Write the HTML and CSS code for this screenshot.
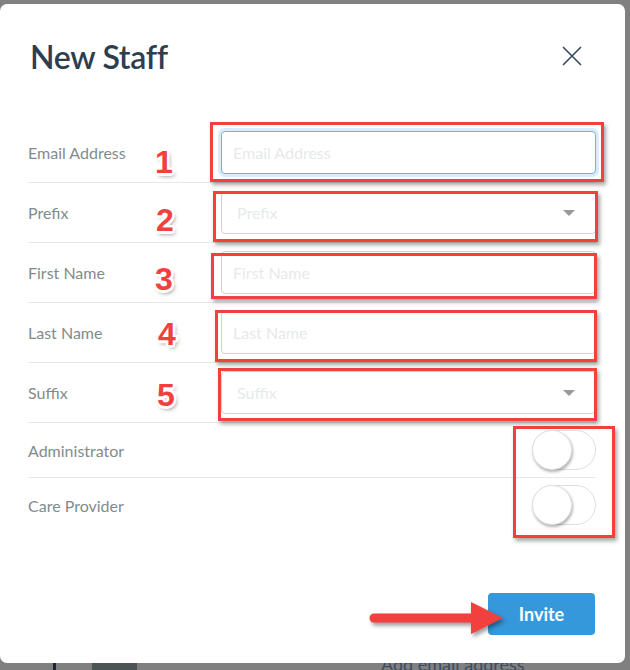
FILE: index.html
```html
<!DOCTYPE html>
<html lang="en">
<head>
  <meta charset="UTF-8" />
  <meta name="viewport" content="width=device-width, initial-scale=1.0" />
  <title>New Staff</title>
  <link rel="stylesheet" href="styles.css">
</head>
<body>
  <div class="backdrop">
    <div class="modal">
      <div class="modal-header">
        <h1>New Staff</h1>
        <button class="close" aria-label="Close">
          <svg width="20" height="20" viewBox="0 0 20 20">
            <path d="M1 1 L19 19 M19 1 L1 19" stroke="#34495e" stroke-width="1.6" fill="none" />
          </svg>
        </button>
      </div>

      <form class="fields">
        <div class="field">
          <label for="email">Email Address</label>
          <input type="email" id="email" class="input focused" placeholder="Email Address" />
        </div>
        <div class="field">
          <label for="prefix">Prefix</label>
          <div class="select">
            <span class="placeholder">Prefix</span>
            <span class="caret"></span>
          </div>
        </div>
        <div class="field">
          <label for="firstName">First Name</label>
          <input type="text" id="firstName" class="input" placeholder="First Name" />
        </div>
        <div class="field">
          <label for="lastName">Last Name</label>
          <input type="text" id="lastName" class="input" placeholder="Last Name" />
        </div>
        <div class="field">
          <label for="suffix">Suffix</label>
          <div class="select">
            <span class="placeholder">Suffix</span>
            <span class="caret"></span>
          </div>
        </div>
        <div class="field toggle-row">
          <label>Administrator</label>
          <span class="toggle"><span class="knob"></span></span>
        </div>
        <div class="field toggle-row last">
          <label>Care Provider</label>
          <span class="toggle"><span class="knob"></span></span>
        </div>
      </form>

      <div class="modal-footer">
        <button class="invite">Invite</button>
      </div>

      <!-- annotations drawn on top of the screenshot -->
      <div class="marks">
        <div class="box b1"></div>
        <div class="box b2"></div>
        <div class="box b3"></div>
        <div class="box b4"></div>
        <div class="box b5"></div>
        <div class="box b6"></div>
        <span class="num n1">1</span>
        <span class="num n2">2</span>
        <span class="num n3">3</span>
        <span class="num n4">4</span>
        <span class="num n5">5</span>
        <svg class="arrow" width="145" height="44" viewBox="0 0 145 44">
          <line x1="9" y1="20" x2="112" y2="20" stroke="#f2403f" stroke-width="9" stroke-linecap="round" />
          <polygon points="106,4 138,20 106,36" fill="#f2403f" />
        </svg>
      </div>
    </div>
    <div class="page-behind">
      <span class="side-bar"></span>
      <span class="tag"></span>
      <span class="link">Add email address</span>
    </div>
  </div>
</body>
</html>
```

FILE: styles.css
```css
/* overlay page */
body {
  margin: 0;
  background: #808080;
  font-family: Lato, "Open Sans", sans-serif;
  overflow: hidden;
}
.backdrop {
  width: 630px;
  height: 670px;
  padding-top: 4px;
  box-sizing: border-box;
}
.modal {
  position: relative;
  z-index: 1;
  width: 625px;
  height: 659px;
  background: #fff;
  border-radius: 7px;
  display: flex;
  flex-direction: column;
}
.modal-header {
  height: 119px;
  box-sizing: border-box;
  padding: 33px 43px 0 30px;
  display: flex;
  justify-content: space-between;
  align-items: flex-start;
}
.modal-header h1 {
  margin: 0;
  font-size: 32px;
  line-height: 40px;
  font-weight: 600;
  color: #2c3e50;
  letter-spacing: -0.3px;
}
.close {
  border: none;
  background: none;
  padding: 0;
  margin-top: 9px;
  cursor: pointer;
}

/* form rows */
.fields {
  padding: 0 29px 0 28px;
}
.field {
  display: grid;
  grid-template-columns: 193px 375px;
  align-items: center;
  padding: 8px 0;
  border-bottom: 1px solid #e7e9e9;
}
.field label {
  font-size: 16px;
  color: #7f8c8d;
}
.input, .select {
  height: 43px;
  box-sizing: border-box;
  border: 1px solid #cfd3d3;
  border-radius: 4px;
  font-family: inherit;
  font-size: 16px;
  padding: 0 11px;
  background: #fff;
}
.input::placeholder {
  color: #e6eaea;
}
.input.focused {
  border-color: #70b2e6;
  box-shadow: 0 0 0 3px #dcebf7;
  outline: none;
}
.select {
  display: flex;
  align-items: center;
  justify-content: space-between;
  padding: 0 20px 0 15px;
}
.placeholder {
  color: #e6eaea;
}
.caret {
  width: 0;
  height: 0;
  border-left: 6px solid transparent;
  border-right: 6px solid transparent;
  border-top: 6px solid #999;
}
.toggle-row {
  padding: 7px 0;
}
.toggle-row.last {
  border-bottom: none;
}
.toggle {
  justify-self: end;
  width: 64px;
  height: 40px;
  box-sizing: border-box;
  border: 1px solid #dedede;
  border-radius: 20px;
  position: relative;
}
.knob {
  position: absolute;
  left: -1px;
  top: -1px;
  width: 40px;
  height: 40px;
  box-sizing: border-box;
  border-radius: 50%;
  background: #fff;
  border: 1px solid #e2e2e2;
  box-shadow: 1px 2px 3px rgba(0, 0, 0, 0.3);
}

.modal-footer {
  margin-top: auto;
  padding: 0 30px 28px;
  display: flex;
  justify-content: flex-end;
}
.invite {
  width: 107px;
  height: 42px;
  border: none;
  border-radius: 4px;
  background: #3498db;
  color: #fff;
  font-family: inherit;
  font-size: 18px;
  font-weight: 700;
  cursor: pointer;
}

/* annotation layer */
.marks {
  position: absolute;
  inset: 0;
  pointer-events: none;
}
.box {
  position: absolute;
  border: 3px solid #f2403f;
  box-shadow: 2px 3px 4px rgba(0, 0, 0, 0.35);
  box-sizing: border-box;
}
.b1 { left: 210px; top: 118px; width: 394px; height: 60px; }
.b2 { left: 213px; top: 187px; width: 385px; height: 51px; }
.b3 { left: 211px; top: 249px; width: 386px; height: 46px; }
.b4 { left: 215px; top: 306px; width: 382px; height: 52px; }
.b5 { left: 218px; top: 364px; width: 379px; height: 53px; }
.b6 { left: 513px; top: 422px; width: 102px; height: 112px; }
.num {
  position: absolute;
  width: 30px;
  height: 40px;
  line-height: 40px;
  text-align: center;
  font-family: "Liberation Sans", Arial, sans-serif;
  font-weight: 700;
  font-size: 32px;
  color: #f2403f;
  text-shadow: 2.5px 0 #fff, -2.5px 0 #fff, 0 2.5px #fff, 0 -2.5px #fff,
    2px 2px #fff, -2px -2px #fff, 2px -2px #fff, -2px 2px #fff,
    2px 3px 4px rgba(0, 0, 0, 0.5);
}
.n1 { left: 149px; top: 138px; }
.n2 { left: 150px; top: 196px; }
.n3 { left: 149px; top: 255px; }
.n4 { left: 152px; top: 310px; }
.n5 { left: 151px; top: 371px; }
.arrow {
  position: absolute;
  left: 365px;
  top: 594px;
  filter: drop-shadow(2px 3px 2px rgba(0, 0, 0, 0.4));
}

/* the page under the overlay */
.page-behind {
  height: 7px;
  position: relative;
  overflow: hidden;
}
.side-bar {
  position: absolute;
  left: 53px;
  top: 0;
  width: 3px;
  height: 7px;
  background: #1c2533;
}
.tag {
  position: absolute;
  left: 92px;
  top: 0;
  width: 45px;
  height: 7px;
  background: #4d5455;
}
.link {
  position: absolute;
  left: 381px;
  top: -10px;
  font-size: 18px;
  color: #3b4c63;
}
```
